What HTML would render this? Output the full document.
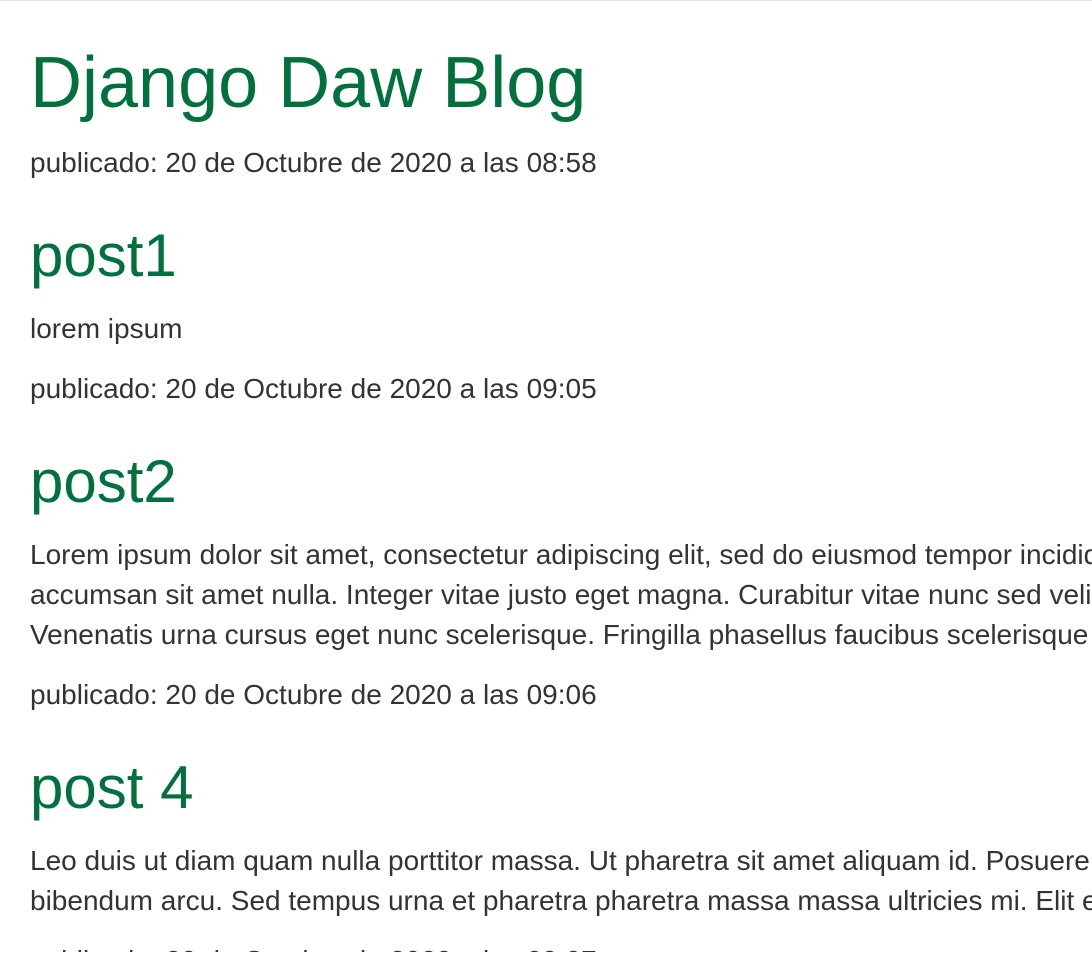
<!DOCTYPE html>
<html><head><meta charset="utf-8"><style>
html,body{margin:0;padding:0;background:#fff;overflow:hidden;width:1092px;height:952px}
body{font-family:"Liberation Sans",Arial,sans-serif;font-size:28px;line-height:40px;color:#333;border-top:1px solid #e5e5e5}
.c{padding:2px 30px 0;white-space:nowrap;overflow:hidden;width:1032px;height:949px}
h1,h2{font-weight:500;color:#00703c;line-height:1.1;margin:40px 0 20px}
h1{font-size:72px;margin-top:41px}
h2{font-size:60px}
p{margin:0 0 20px}
</style></head><body><div class="c">
<h1>Django Daw Blog</h1>
<p>publicado: 20 de Octubre de 2020 a las 08:58</p>
<h2>post1</h2>
<p>lorem ipsum</p>
<p>publicado: 20 de Octubre de 2020 a las 09:05</p>
<h2>post2</h2>
<p>Lorem ipsum dolor sit amet, consectetur adipiscing elit, sed do eiusmod tempor incididunt ut labore et dolore magna aliqua.<br>accumsan sit amet nulla. Integer vitae justo eget magna. Curabitur vitae nunc sed velit dignissim sodales ut eu sem.<br>Venenatis urna cursus eget nunc scelerisque. Fringilla phasellus faucibus scelerisque eleifend donec pretium vulputate.</p>
<p>publicado: 20 de Octubre de 2020 a las 09:06</p>
<h2>post 4</h2>
<p>Leo duis ut diam quam nulla porttitor massa. Ut pharetra sit amet aliquam id. Posuere urna nec tincidunt praesent semper.<br>bibendum arcu. Sed tempus urna et pharetra pharetra massa massa ultricies mi. Elit eget gravida cum sociis natoque.</p>
<p>publicado: 20 de Octubre de 2020 a las 09:07</p>
</div></body></html>
